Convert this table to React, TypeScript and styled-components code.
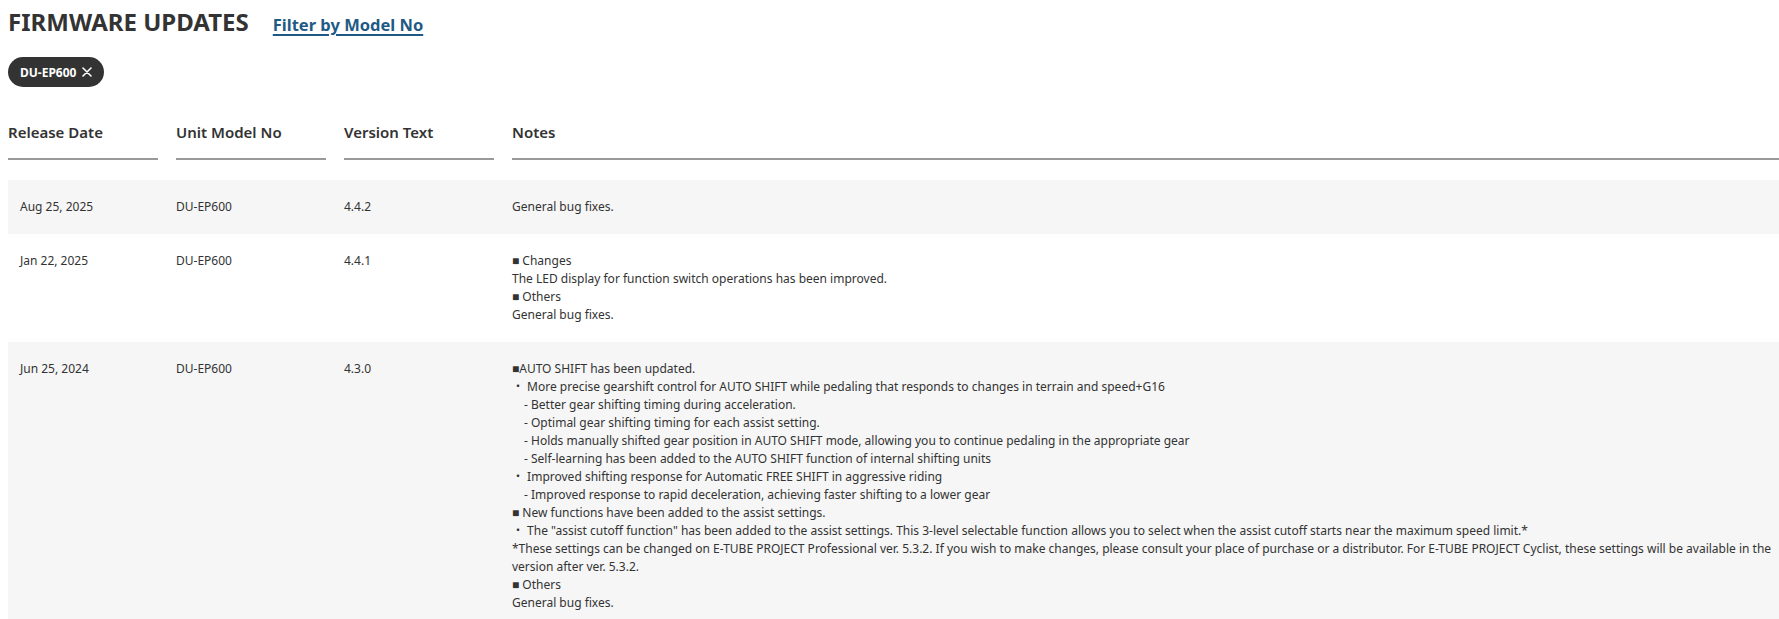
import React from "react";
import styled, { createGlobalStyle } from "styled-components";

const GlobalStyle = createGlobalStyle`
  html { scrollbar-width: none; }
  body {
    margin: 0;
    background: #ffffff;
    color: #333333;
    font-family: "Noto Sans", "Noto Sans CJK JP", sans-serif;
  }
  * { box-sizing: border-box; }
`;

const Page = styled.div`
  padding: 6px 0 0 8px;
`;

const TitleBar = styled.div`
  display: flex;
  align-items: baseline;
  gap: 24px;
`;

const Title = styled.h1`
  margin: 0;
  font-size: 24px;
  line-height: 32px;
  font-weight: 700;
  color: #333333;
`;

const FilterLink = styled.a`
  font-size: 16.5px;
  font-weight: 700;
  color: #1f5a85;
  text-decoration: underline;
  text-decoration-thickness: 2px;
  text-underline-offset: 3px;
  cursor: pointer;
`;

const ChipRow = styled.div`
  display: flex;
  margin-top: 19px;
`;

const Chip = styled.button`
  display: inline-flex;
  align-items: center;
  gap: 6px;
  height: 30px;
  padding: 0 12px;
  border: none;
  border-radius: 15px;
  background: #333333;
  color: #ffffff;
  font-family: "Noto Sans", sans-serif;
  font-size: 12px;
  font-weight: 700;
  cursor: pointer;
`;

const Table = styled.div`
  margin-top: 34px;
`;

const cols = "150px 150px 150px 1fr";

const HeadRow = styled.div`
  display: grid;
  grid-template-columns: ${cols};
  column-gap: 18px;
`;

const HeadCell = styled.div`
  font-size: 15px;
  line-height: 22px;
  font-weight: 600;
  color: #333333;
  padding-bottom: 15px;
  border-bottom: 2px solid #999999;
`;

const Body = styled.div`
  margin-top: 20px;
`;

const Row = styled.div<{ $shaded: boolean }>`
  display: grid;
  grid-template-columns: ${cols};
  column-gap: 18px;
  background: ${(p) => (p.$shaded ? "#f6f6f6" : "#ffffff")};
  padding: 18px 0;
`;

const Cell = styled.div<{ $first?: boolean }>`
  font-size: 12px;
  line-height: 18px;
  color: #333333;
  padding-left: ${(p) => (p.$first ? "12px" : "0")};
`;

const Notes = styled.div`
  font-family: "Noto Sans", "Liberation Sans", "Noto Sans CJK JP", sans-serif;
  font-size: 12px;
  line-height: 18px;
  color: #333333;
  white-space: pre-line;
  padding-right: 6px;
`;

const CloseIcon = () => (
  <svg width="10" height="10" viewBox="0 0 10 10" aria-hidden="true">
    <path d="M1 1 L9 9 M9 1 L1 9" stroke="#ffffff" strokeWidth="1.6" strokeLinecap="round" />
  </svg>
);

const rows = [
  {
    date: "Aug 25, 2025",
    model: "DU-EP600",
    version: "4.4.2",
    notes: "General bug fixes.",
  },
  {
    date: "Jan 22, 2025",
    model: "DU-EP600",
    version: "4.4.1",
    notes:
      "■ Changes\nThe LED display for function switch operations has been improved.\n■ Others\nGeneral bug fixes.",
  },
  {
    date: "Jun 25, 2024",
    model: "DU-EP600",
    version: "4.3.0",
    notes: [
      "■AUTO SHIFT has been updated.",
      "・ More precise gearshift control for AUTO SHIFT while pedaling that responds to changes in terrain and speed+G16",
      "\u3000- Better gear shifting timing during acceleration.",
      "\u3000- Optimal gear shifting timing for each assist setting.",
      "\u3000- Holds manually shifted gear position in AUTO SHIFT mode, allowing you to continue pedaling in the appropriate gear",
      "\u3000- Self-learning has been added to the AUTO SHIFT function of internal shifting units",
      "・ Improved shifting response for Automatic FREE SHIFT in aggressive riding",
      "\u3000- Improved response to rapid deceleration, achieving faster shifting to a lower gear",
      "■ New functions have been added to the assist settings.",
      "・ The \"assist cutoff function\" has been added to the assist settings. This 3-level selectable function allows you to select when the assist cutoff starts near the maximum speed limit.*",
      "*These settings can be changed on E-TUBE PROJECT Professional ver. 5.3.2. If you wish to make changes, please consult your place of purchase or a distributor. For E-TUBE PROJECT Cyclist, these settings will be available in the version after ver. 5.3.2.",
      "■ Others",
      "General bug fixes.",
    ].join("\n"),
  },
];

export default function App() {
  return (
    <>
      <GlobalStyle />
      <Page>
        <TitleBar>
          <Title>FIRMWARE UPDATES</Title>
          <FilterLink>Filter by Model No</FilterLink>
        </TitleBar>
        <ChipRow>
          <Chip>
            DU-EP600
            <CloseIcon />
          </Chip>
        </ChipRow>
        <Table>
          <HeadRow>
            <HeadCell>Release Date</HeadCell>
            <HeadCell>Unit Model No</HeadCell>
            <HeadCell>Version Text</HeadCell>
            <HeadCell>Notes</HeadCell>
          </HeadRow>
          <Body>
            {rows.map((r, i) => (
              <Row key={r.version} $shaded={i % 2 === 0}>
                <Cell $first>{r.date}</Cell>
                <Cell>{r.model}</Cell>
                <Cell>{r.version}</Cell>
                <Notes>{r.notes}</Notes>
              </Row>
            ))}
          </Body>
        </Table>
      </Page>
    </>
  );
}
